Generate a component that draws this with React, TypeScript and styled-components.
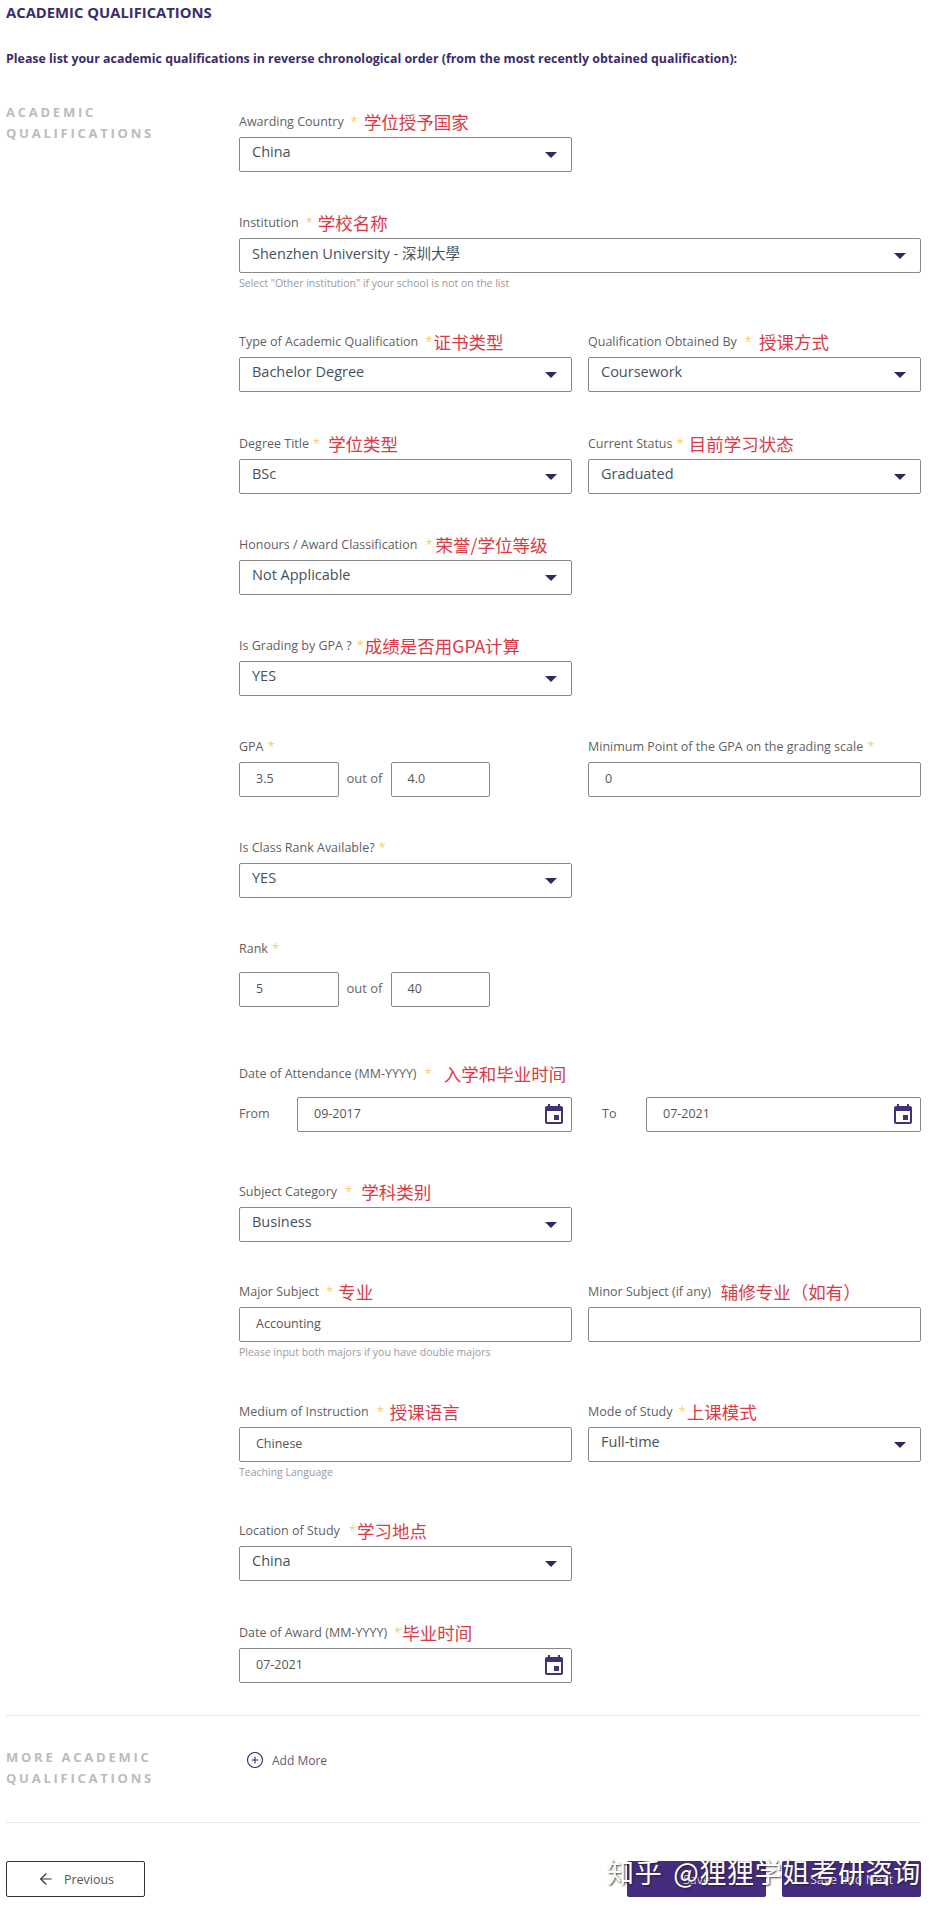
import React from "react";
import styled, { createGlobalStyle } from "styled-components";
import { ArrowLeft, CirclePlus } from "lucide-react";

const GlobalStyle = createGlobalStyle`
  html, body {
    margin: 0;
    padding: 0;
    background: #fff;
  }
  body {
    font-family: "Open Sans", "Noto Sans CJK SC", sans-serif;
    color: #555;
  }
`;

interface FieldProps {
  label: string;
  star?: number;
  noteGap?: number;
  note?: string;
  after?: number;
  help?: string;
  children: React.ReactNode;
}

const Field = ({ label, star, noteGap, note, after, help, children }: FieldProps) => (
  <div>
    <LabelRow $after={after ?? 4}>
      <LabelText>{label}</LabelText>
      {star !== undefined && <Star $gap={star}>*</Star>}
      {note && <Note $gap={noteGap ?? 4}>{note}</Note>}
    </LabelRow>
    {children}
    {help && <Help>{help}</Help>}
  </div>
);

const SelectBox = ({ value }: { value: string }) => (
  <Box>
    <SelectValue>{value}</SelectValue>
    <Caret />
  </Box>
);

const InputBox = ({ value }: { value?: string }) => (
  <Box>
    <InputValue>{value}</InputValue>
  </Box>
);

const DateBox = ({ value }: { value: string }) => (
  <Box>
    <InputValue>{value}</InputValue>
    <CalendarIcon viewBox="0 0 24 24">
      <path d="M17 12h-5v5h5v-5zM16 1v2H8V1H6v2H5c-1.11 0-1.99.9-1.99 2L3 19c0 1.1.89 2 2 2h14c1.1 0 2-.9 2-2V5c0-1.1-.9-2-2-2h-1V1h-2zm3 18H5V8h14v11z" />
    </CalendarIcon>
  </Box>
);

const OutOf = ({ a, b }: { a: string; b: string }) => (
  <OutOfRow>
    <InputBox value={a} />
    <OutOfText>out of</OutOfText>
    <InputBox value={b} />
  </OutOfRow>
);

export default function App() {
  return (
    <Page>
      <GlobalStyle />
      <Title>ACADEMIC QUALIFICATIONS</Title>
      <Intro>
        Please list your academic qualifications in reverse chronological order (from the most
        recently obtained qualification):
      </Intro>

      <Section>
        <SideTitle>
          ACADEMIC
          <br />
          QUALIFICATIONS
        </SideTitle>
        <Form>
          <Row $top={0}>
            <Field label="Awarding Country" star={7} noteGap={6} note="学位授予国家">
              <SelectBox value="China" />
            </Field>
          </Row>

          <Row $top={38}>
            <Wide>
              <Field label="Institution" star={7} noteGap={5} note="学校名称" help={'Select "Other institution" if your school is not on the list'}>
                <SelectBox value="Shenzhen University - 深圳大學" />
              </Field>
            </Wide>
          </Row>

          <Row $top={38}>
            <Field label="Type of Academic Qualification" star={7} noteGap={1} note="证书类型">
              <SelectBox value="Bachelor Degree" />
            </Field>
            <Field label="Qualification Obtained By" star={8} noteGap={7} note="授课方式">
              <SelectBox value="Coursework" />
            </Field>
          </Row>

          <Row $top={39}>
            <Field label="Degree Title" star={4} noteGap={8} note="学位类型">
              <SelectBox value="BSc" />
            </Field>
            <Field label="Current Status" star={4} noteGap={5} note="目前学习状态">
              <SelectBox value="Graduated" />
            </Field>
          </Row>

          <Row $top={38}>
            <Field label="Honours / Award Classification" star={8} noteGap={3} note="荣誉/学位等级">
              <SelectBox value="Not Applicable" />
            </Field>
          </Row>

          <Row $top={38}>
            <Field label="Is Grading by GPA ?" star={5} noteGap={1} note="成绩是否用GPA计算">
              <SelectBox value="YES" />
            </Field>
          </Row>

          <Row $top={38}>
            <Field label="GPA" star={4}>
              <OutOf a="3.5" b="4.0" />
            </Field>
            <Field label="Minimum Point of the GPA on the grading scale" star={4}>
              <InputBox value="0" />
            </Field>
          </Row>

          <Row $top={38}>
            <Field label="Is Class Rank Available?" star={4}>
              <SelectBox value="YES" />
            </Field>
          </Row>

          <Row $top={38}>
            <Field label="Rank" star={4} after={12}>
              <OutOf a="5" b="40" />
            </Field>
          </Row>

          <Row $top={54}>
            <Wide>
              <Field label="Date of Attendance (MM-YYYY)" star={8} noteGap={12} note="入学和毕业时间" after={12}>
                <DateRow>
                  <DateLabel $indent={0}>From</DateLabel>
                  <DateBox value="09-2017" />
                  <DateLabel $indent={30}>To</DateLabel>
                  <DateBox value="07-2021" />
                </DateRow>
              </Field>
            </Wide>
          </Row>

          <Row $top={47}>
            <Field label="Subject Category" star={8} noteGap={9} note="学科类别">
              <SelectBox value="Business" />
            </Field>
          </Row>

          <Row $top={37}>
            <Field label="Major Subject" star={7} noteGap={5} note="专业" help="Please input both majors if you have double majors">
              <InputBox value="Accounting" />
            </Field>
            <Field label="Minor Subject (if any)" noteGap={10} note="辅修专业（如有）">
              <InputBox />
            </Field>
          </Row>

          <Row $top={39}>
            <Field label="Medium of Instruction" star={8} noteGap={6} note="授课语言" help="Teaching Language">
              <InputBox value="Chinese" />
            </Field>
            <Field label="Mode of Study" star={6} noteGap={1} note="上课模式">
              <SelectBox value="Full-time" />
            </Field>
          </Row>

          <Row $top={38}>
            <Field label="Location of Study" star={9} noteGap={1} note="学习地点">
              <SelectBox value="China" />
            </Field>
          </Row>

          <Row $top={39}>
            <Field label="Date of Award (MM-YYYY)" star={7} noteGap={1} note="毕业时间">
              <DateBox value="07-2021" />
            </Field>
          </Row>
        </Form>
      </Section>

      <MoreSection>
        <SideTitle>
          MORE ACADEMIC
          <br />
          QUALIFICATIONS
        </SideTitle>
        <AddMore>
          <CirclePlus size={18} strokeWidth={1.5} color="#2f2a5e" />
          Add More
        </AddMore>
      </MoreSection>

      <Footer>
        <PrevButton>
          <ArrowLeft size={18} strokeWidth={1.5} color="#333" />
          Previous
        </PrevButton>
        <FooterRight>
          <PurpleButton>Save</PurpleButton>
          <PurpleButton>Save and Next</PurpleButton>
        </FooterRight>
        <Watermark>知乎 @狸狸学姐考研咨询</Watermark>
      </Footer>
    </Page>
  );
}

const Page = styled.div`
  width: 941px;
  height: 1911px;
  box-sizing: border-box;
  padding: 0 20px 0 6px;
  overflow: hidden;
`;

const Title = styled.h1`
  margin: 0;
  padding-top: 3px;
  font-size: 14.8px;
  line-height: 18px;
  font-weight: 700;
  color: #3b2c6b;
`;

const Intro = styled.p`
  margin: 28px 0 0;
  font-size: 12.4px;
  line-height: 20px;
  font-weight: 700;
  color: #3b2c6b;
  white-space: nowrap;
`;

const Section = styled.section`
  display: grid;
  grid-template-columns: 233px 1fr;
  margin-top: 32px;
`;

const SideTitle = styled.h2`
  margin: 1px 0 0;
  font-size: 13px;
  line-height: 21px;
  font-weight: 700;
  letter-spacing: 2.75px;
  color: #bcbcbc;
  white-space: nowrap;
`;

const Form = styled.div`
  padding-top: 8px;
`;

const Row = styled.div<{ $top: number }>`
  display: grid;
  grid-template-columns: 333px 333px;
  column-gap: 16px;
  margin-top: ${(p) => p.$top}px;
`;

const Wide = styled.div`
  grid-column: 1 / 3;
`;

const LabelRow = styled.div<{ $after: number }>`
  display: flex;
  align-items: center;
  height: 24px;
  margin-bottom: ${(p) => p.$after}px;
  white-space: nowrap;
`;

const LabelText = styled.span`
  font-size: 12.5px;
  color: #5f5f5f;
`;

const Star = styled.span<{ $gap: number }>`
  margin-left: ${(p) => p.$gap}px;
  font-size: 13px;
  color: #f2cf6a;
`;

const Note = styled.span<{ $gap: number }>`
  margin-left: ${(p) => p.$gap}px;
  font-family: "Noto Sans CJK SC", sans-serif;
  font-size: 17.5px;
  font-weight: 400;
  color: #d93a46;
`;

const Box = styled.div`
  position: relative;
  display: flex;
  align-items: center;
  justify-content: space-between;
  flex: 1;
  height: 35px;
  box-sizing: border-box;
  border: 1px solid #888;
  border-radius: 2px;
  background: #fff;
`;

const SelectValue = styled.span`
  padding: 0 0 6px 12px;
  font-size: 14.5px;
  color: #47515e;
`;

const InputValue = styled.span`
  padding: 0 0 3px 16px;
  font-size: 12.5px;
  color: #555;
`;

const Caret = styled.span`
  width: 0;
  height: 0;
  margin-right: 14px;
  border-left: 6px solid transparent;
  border-right: 6px solid transparent;
  border-top: 6px solid #2f2a5e;
`;

const CalendarIcon = styled.svg`
  width: 24px;
  height: 24px;
  margin-right: 5px;
  fill: #41307a;
`;

const Help = styled.div`
  margin-top: 2px;
  font-size: 10.5px;
  line-height: 16px;
  color: #9a9a9a;
`;

const OutOfRow = styled.div`
  display: flex;
  align-items: center;
  width: 251px;
`;

const OutOfText = styled.span`
  width: 52px;
  padding-bottom: 3px;
  text-align: center;
  font-size: 13px;
  color: #666;
`;

const DateRow = styled.div`
  display: grid;
  grid-template-columns: 58px 275px 74px 275px;
  align-items: center;
`;

const DateLabel = styled.span<{ $indent: number }>`
  padding: 0 0 3px ${(p) => p.$indent}px;
  font-size: 12.5px;
  color: #5f5f5f;
`;

const MoreSection = styled.section`
  display: grid;
  grid-template-columns: 233px 1fr;
  height: 108px;
  box-sizing: border-box;
  margin-top: 32px;
  padding-top: 30px;
  border-top: 1px solid #e6e6e6;
  border-bottom: 1px solid #e6e6e6;
`;

const AddMore = styled.div`
  display: flex;
  align-items: center;
  gap: 8px;
  height: 24px;
  padding: 2px 0 0 7px;
  font-size: 12px;
  color: #5d5b78;
`;

const Footer = styled.div`
  position: relative;
  display: flex;
  justify-content: space-between;
  margin-top: 38px;
`;

const FooterRight = styled.div`
  display: flex;
  gap: 16px;
`;

const PrevButton = styled.div`
  display: flex;
  align-items: center;
  justify-content: center;
  gap: 9px;
  width: 139px;
  height: 36px;
  box-sizing: border-box;
  border: 1px solid #333;
  border-radius: 2px;
  font-size: 12.5px;
  color: #555;
`;

const PurpleButton = styled.div`
  display: flex;
  align-items: center;
  justify-content: center;
  width: 139px;
  height: 36px;
  border-radius: 2px;
  background: #452c7e;
  font-size: 12.5px;
  color: #d8d3e6;
`;

const Watermark = styled.div`
  position: absolute;
  right: 0;
  top: -6px;
  font-family: "Noto Sans CJK SC", sans-serif;
  font-size: 27px;
  line-height: 34px;
  letter-spacing: 0.7px;
  word-spacing: 4px;
  color: #fff;
  text-shadow: 1px 1px 2px rgba(30, 30, 30, 0.85);
  white-space: nowrap;
`;
